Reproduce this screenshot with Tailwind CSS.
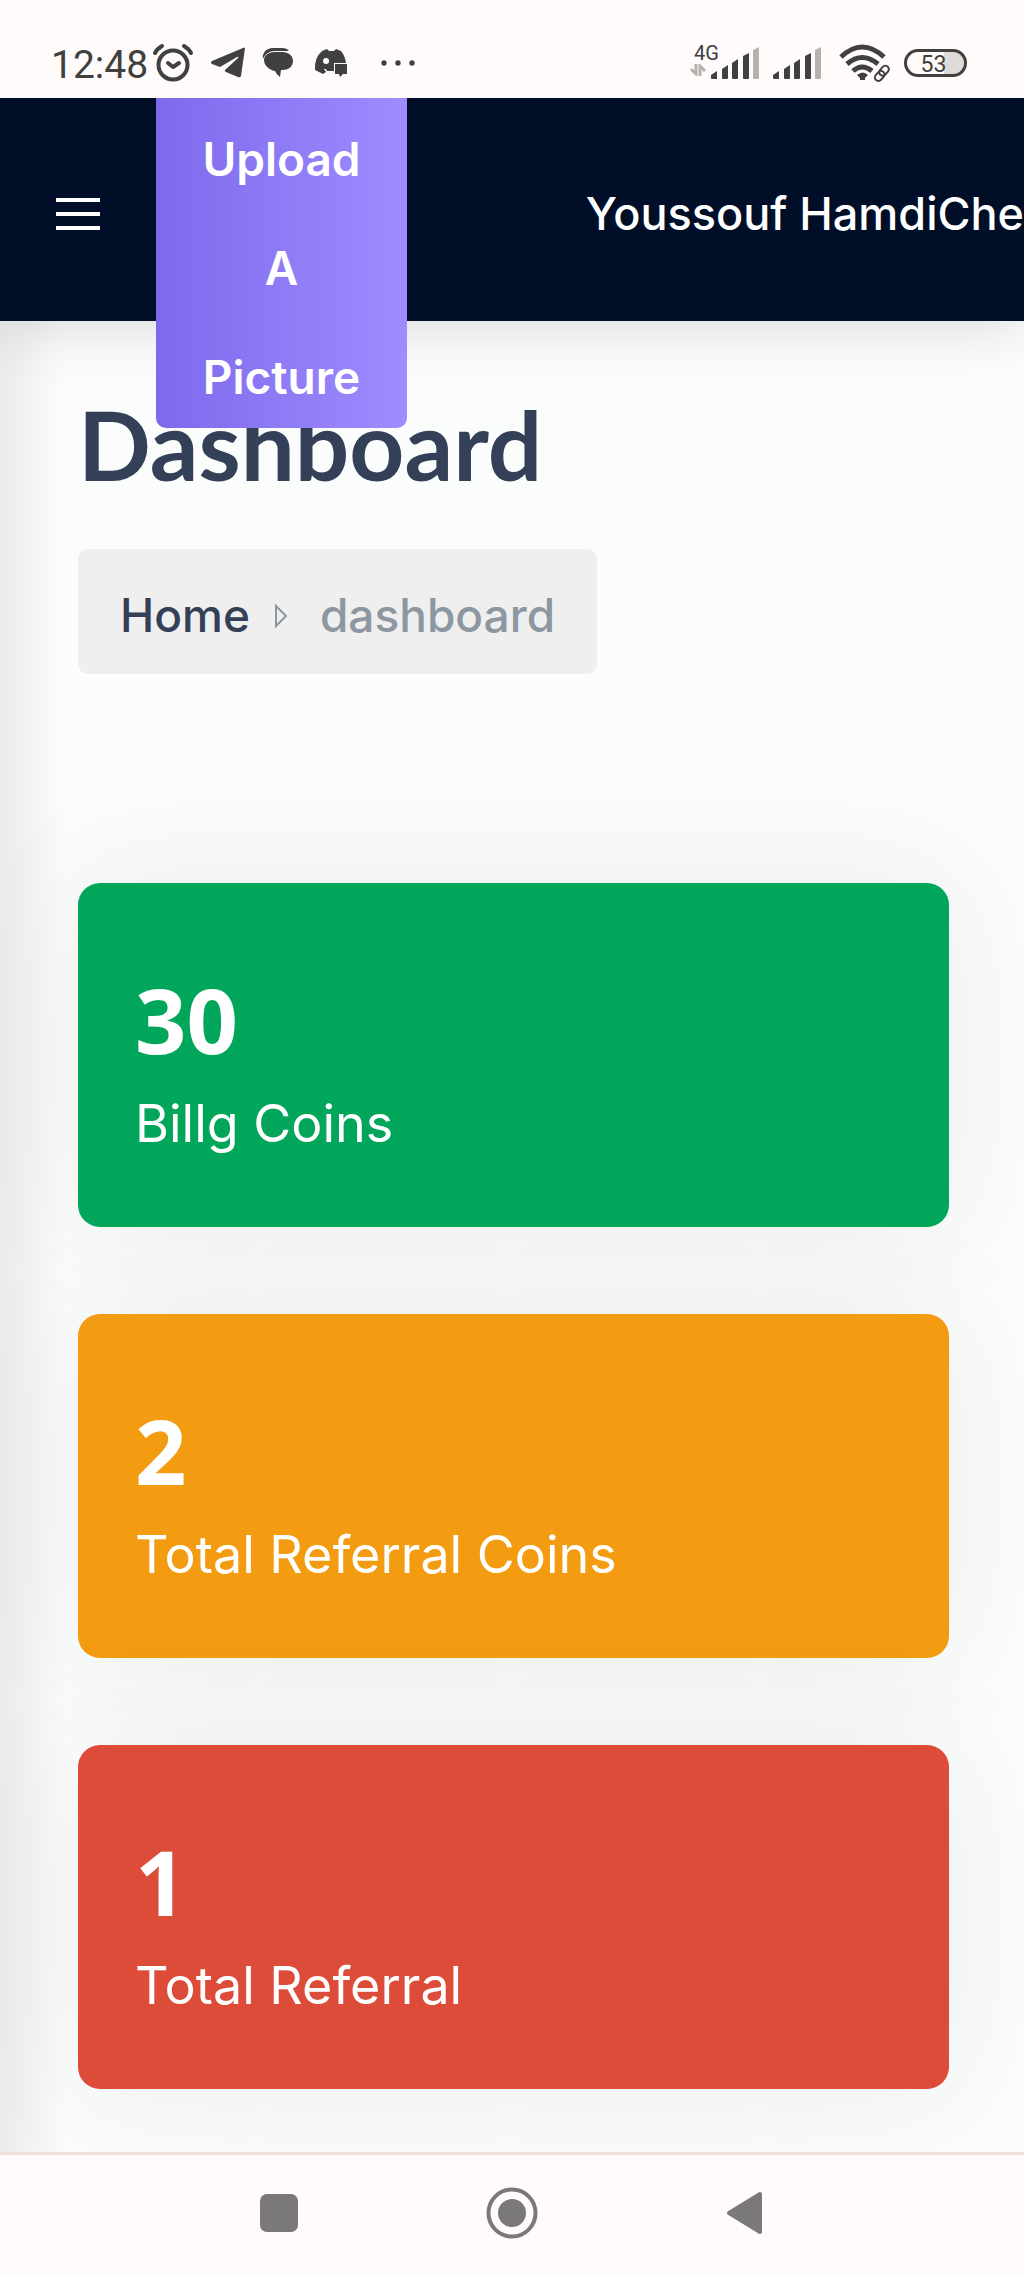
<!DOCTYPE html>
<html lang="en">
<head>
  <meta charset="UTF-8" />
  <meta name="viewport" content="width=device-width, initial-scale=1.0" />
  <title>Dashboard</title>
  <script src="https://cdn.jsdelivr.net/npm/@tailwindcss/browser@4"></script>
</head>
<body class="min-h-screen flex flex-col overflow-x-hidden bg-[#fbfdfc] font-['Inter',sans-serif] text-[46px] font-medium">

  <!-- Status bar -->
  <div class="relative z-30 h-[98px] shrink-0 bg-[#fffbfa] pl-[51px] pr-[57px] pt-7 flex items-center justify-between text-[#40403e]">
    <div class="flex items-center">
      <span class="font-['Roboto',sans-serif] text-[39px] leading-[48px] font-normal pt-1">12:48</span>
      <svg class="w-[42px] h-[42px] ml-1" viewBox="0 0 42 42" fill="none" stroke="currentColor" stroke-width="4" stroke-linecap="round" stroke-linejoin="round">
        <circle cx="21" cy="23" r="14.500" />
        <path d="M3 11q2-4 7-7M39 11q-2-4-7-7" />
        <path d="M16 21l5 4 6-4" />
      </svg>
      <svg class="w-[36px] h-[32px] ml-4" viewBox="0 0 36 32" fill="currentColor">
        <path d="M35 1Q35 0 33 1L2 14Q0 16 2 17l8 3 17-10q2-1 1 1L15 23q-1 1 1 2l12 5q2 1 3-1z" />
      </svg>
      <svg class="w-[32px] h-[32px] ml-4" viewBox="0 0 32 32" fill="currentColor">
        <path d="M1 12C0 6 4 1 11 1h9q5 0 7 3H13C7 4 3 7 1 12z" />
        <path d="M13 5h7c7 0 11 4 11 9s-4 9-10 9h-2l-1 7q-4-3-5-6C7 23 2 18 2 13s5-8 11-8z" />
      </svg>
      <svg class="w-[34px] h-[32px] ml-5" viewBox="0 0 34 32" fill="currentColor">
        <path fill-rule="evenodd" d="M8 4l5-2 2 2h5l2-2 5 2q4 5 5 12H20v8h-7l-1-2h-2l2 3-3 2-8-4Q0 11 8 4zM12 11a3 3 0 1 0 .1 6 3 3 0 0 0-.1-6z" />
        <path d="M21 17h12v10h-4l-3 3-1-3h-4z" />
      </svg>
      <svg class="w-[36px] h-[8px] ml-8" viewBox="0 0 36 8" fill="currentColor">
        <circle cx="4" cy="4" r="2.700" /><circle cx="18" cy="4" r="2.700" /><circle cx="32" cy="4" r="2.700" />
      </svg>
    </div>
    <div class="flex items-center">
      <div class="flex flex-col w-5 pb-2">
        <span class="font-['Roboto',sans-serif] text-[20px] leading-[22px] font-normal pl-1">4G</span>
        <svg class="w-[16px] h-[12px]" viewBox="0 0 16 12" fill="none" stroke="#b5b1af" stroke-width="3">
          <path d="M6 0v10L1 5M10 12V2l5 5" />
        </svg>
      </div>
      <svg class="w-[50px] h-[34px]" viewBox="0 0 50 34" fill="currentColor">
        <path d="M1 29l6-4v8H2q-1 0-1-1z" />
        <path d="M12 23l6-4v13q0 1-1 1h-4q-1 0-1-1z" />
        <path d="M22 17l6-4v19q0 1-1 1h-4q-1 0-1-1z" />
        <path d="M33 10l6-3v25q0 1-1 1h-4q-1 0-1-1z" />
        <path fill="#b5b1af" d="M43 4l6-3v31q0 1-1 1h-4q-1 0-1-1z" />
      </svg>
      <svg class="w-[50px] h-[34px] ml-3" viewBox="0 0 50 34" fill="currentColor">
        <path d="M1 29l6-4v8H2q-1 0-1-1z" />
        <path d="M12 23l6-4v13q0 1-1 1h-4q-1 0-1-1z" />
        <path d="M22 17l6-4v19q0 1-1 1h-4q-1 0-1-1z" />
        <path d="M33 10l6-3v25q0 1-1 1h-4q-1 0-1-1z" />
        <path fill="#b5b1af" d="M43 4l6-3v31q0 1-1 1h-4q-1 0-1-1z" />
      </svg>
      <svg class="w-[54px] h-[38px] ml-4" viewBox="0 0 54 38" fill="none" stroke="currentColor" stroke-width="5">
        <path d="M3 13Q24-7 46 13M9 20q15-13 31 0M15 27q9-8 19 0" />
        <path fill="currentColor" stroke="none" d="M19 31q6-5 11 0l-3 3v2h-5v-2z" />
        <g stroke="#fffbfa" stroke-width="6"><rect x="38" y="25" width="13" height="7" rx="3.500" transform="rotate(-48 44 28)" /></g>
        <g stroke-width="2"><rect x="40" y="23" width="11" height="7" rx="3.500" transform="rotate(-48 46 26)" /><rect x="36" y="29" width="11" height="7" rx="3.500" transform="rotate(-48 41 32)" /></g>
      </svg>
      <div class="ml-3 w-[63px] h-[28px] rounded-full border-[3px] border-current bg-linear-to-r from-[#fffbfa] from-65% to-[#dedbd9] to-65% flex items-center justify-center">
        <span class="font-['Roboto',sans-serif] text-[23px] leading-[24px] font-normal pr-1 pt-1">53</span>
      </div>
    </div>
  </div>

  <!-- Top navbar -->
  <header class="relative z-20 h-[223px] shrink-0 bg-[#000f27] text-white flex items-center shadow-[0_0_60px_rgba(0,0,0,0.16)]">
    <button aria-label="Toggle menu" class="mt-2 ml-[56px] w-[44px] flex flex-col gap-[10px] shrink-0">
      <span class="w-full h-1 bg-white"></span>
      <span class="w-full h-1 bg-white"></span>
      <span class="w-full h-1 bg-white"></span>
    </button>
    <button class="ml-14 w-[251px] shrink-0 px-10 pt-[113px] rounded-[10px] bg-linear-to-r from-[#7e69ec] to-[#9f8cff] leading-[109px] font-semibold">
      <span class="block -mb-1">Upload A Picture</span>
    </button>
    <a href="#" class="mt-2 ml-auto shrink-0 whitespace-nowrap text-[45px]">Youssouf HamdiChe</a>
  </header>

  <!-- Page content -->
  <main class="relative grow overflow-hidden pl-[78px] pr-[75px] pb-[63px]">
    <h1 class="pt-[68px] font-['Lato',sans-serif] text-[96px] leading-[110px] font-bold text-[#344058]">Dashboard</h1>
    <nav aria-label="Breadcrumb" class="mt-[50px] w-fit h-[125px] rounded-[10px] bg-[#eeefee] px-[42px] pt-2 flex items-center">
      <a href="#" class="text-[#344058]">Home</a>
      <svg class="w-[14px] h-[26px] ml-6 mr-8" viewBox="0 0 14 26" fill="none" stroke="#8d97a1" stroke-width="2">
        <path d="M2 3v20l10-10z" />
      </svg>
      <span class="text-[#8d97a1]">dashboard</span>
    </nav>

    <section class="mt-[209px] flex flex-col gap-[87px] text-white">
      <div class="h-[344px] rounded-[22px] bg-[#02a65a] px-[57px] pt-[81px] shadow-[0_0_130px_rgba(30,50,50,0.08)]">
        <h2 class="font-['Open_Sans',sans-serif] text-[90px] leading-[110px] font-bold">30</h2>
        <p class="text-[52px] leading-[100px] font-normal">Billg Coins</p>
      </div>
      <div class="h-[344px] rounded-[22px] bg-[#f39c12] px-[57px] pt-[81px] shadow-[0_0_130px_rgba(30,50,50,0.08)]">
        <h2 class="font-['Open_Sans',sans-serif] text-[90px] leading-[110px] font-bold">2</h2>
        <p class="text-[52px] leading-[100px] font-normal">Total Referral Coins</p>
      </div>
      <div class="h-[344px] rounded-[22px] bg-[#dd4b39] px-[57px] pt-[81px] shadow-[0_0_130px_rgba(30,50,50,0.08)]">
        <h2 class="font-['Open_Sans',sans-serif] text-[90px] leading-[110px] font-bold">1</h2>
        <p class="text-[52px] leading-[100px] font-normal">Total Referral</p>
      </div>
    </section>

    <!-- Shadow of the collapsed sidebar -->
    <div class="absolute inset-y-0 left-0 w-[64px] bg-linear-to-r from-black/7 to-transparent"></div>
  </main>

  <!-- System navigation -->
  <footer class="relative z-10 h-[123px] shrink-0 border-t-3 border-[#efdeda] bg-[#fffbfa] pb-1 flex items-center justify-center gap-[188px] text-[#7b7977]">
    <button aria-label="Recent apps"><svg class="w-[38px] h-[38px]" viewBox="0 0 38 38" fill="currentColor"><rect width="38" height="38" rx="7" /></svg></button>
    <button aria-label="Home"><svg class="w-[52px] h-[52px]" viewBox="0 0 52 52" fill="currentColor"><circle cx="26" cy="26" r="23.500" fill="none" stroke="currentColor" stroke-width="4" /><circle cx="26" cy="26" r="14" /></svg></button>
    <button aria-label="Back"><svg class="w-[38px] h-[44px]" viewBox="0 0 38 44" fill="currentColor" stroke="currentColor" stroke-width="4" stroke-linejoin="round"><path d="M34 3v38L3 22z" /></svg></button>
  </footer>
</body>
</html>
